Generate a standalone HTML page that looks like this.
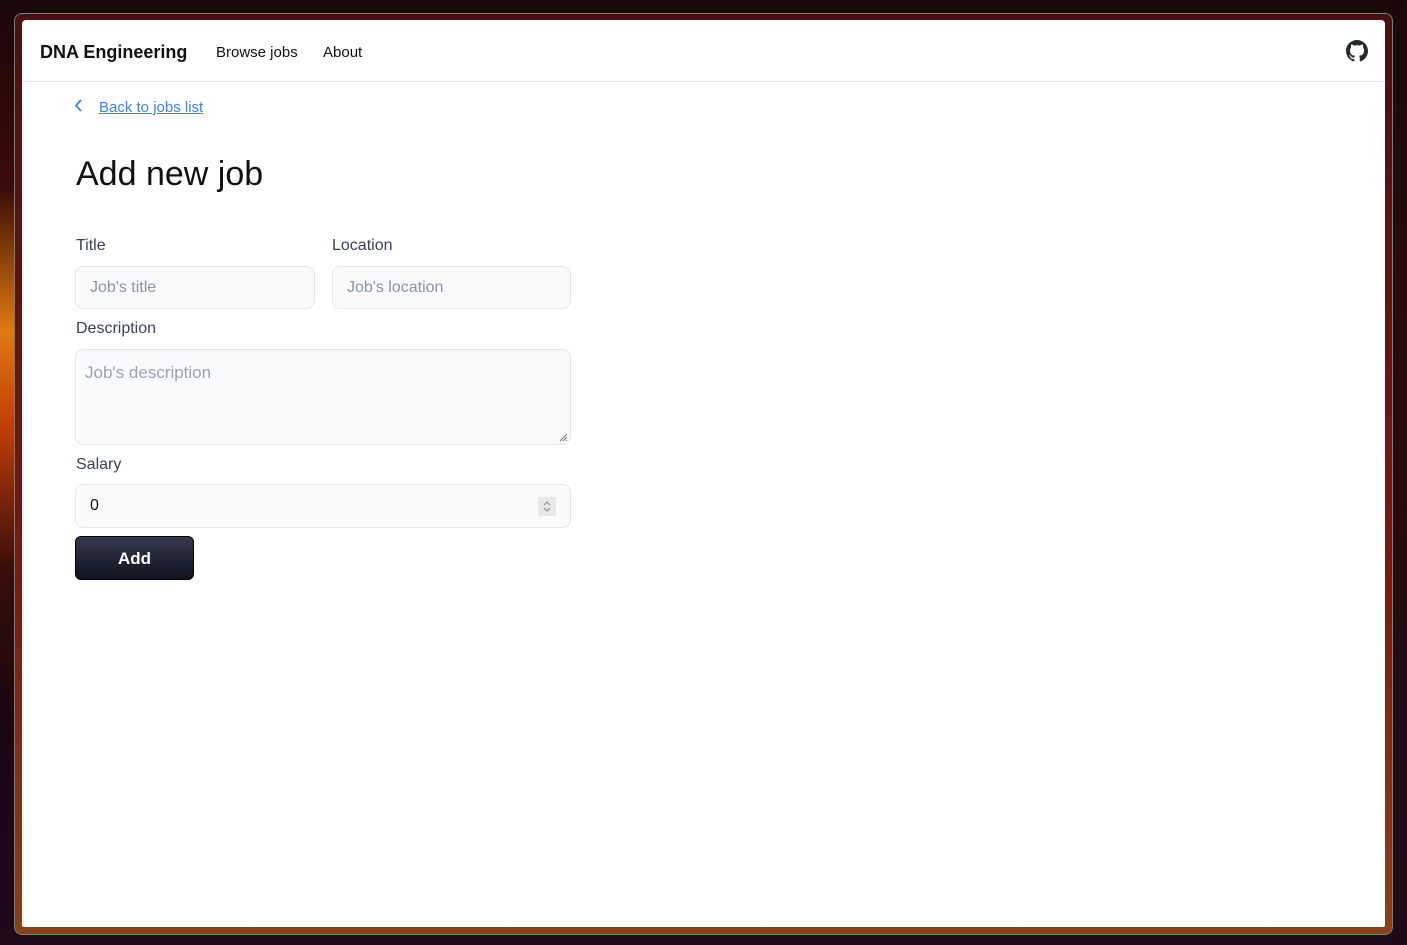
<!DOCTYPE html>
<html><head><meta charset="utf-8"><style>
*{box-sizing:border-box;margin:0;padding:0}
body{width:1407px;height:945px;overflow:hidden;position:relative;font-family:"Liberation Sans",sans-serif;
background:linear-gradient(180deg,#1a0808 0%,#3a0c08 20%,#e07a10 35%,#c23e08 45%,#3a0e0a 60%,#1a0710 75%,#1e0a18 100%)}
.bgr{position:absolute;left:1393px;top:0;width:14px;height:945px;background:linear-gradient(180deg,#1a0808,#2a0a10 40%,#1e0a16)}
.frame{position:absolute;left:14px;top:13px;width:1379px;height:922px;border:1px solid #5e8a86;border-radius:8px;
background:linear-gradient(180deg,#4a1010 0%,#7a1812 60%,#8a4018 100%)}
.page{position:absolute;left:22px;top:20px;width:1363px;height:907px;background:#fff;border-radius:4px 4px 2px 2px}
.nav{position:absolute;left:0;top:0;width:100%;height:62px;border-bottom:1px solid #e5e5e5}
.brand{position:absolute;left:18px;top:22px;font-size:18px;font-weight:bold;color:#111}
.nl{position:absolute;top:24px;font-size:15px;color:#111}
.back{position:absolute;left:77px;top:79px;font-size:15px;color:#3b82f6;text-decoration:underline}
.chev{position:absolute;left:51px;top:78px}
h1{position:absolute;left:54px;top:135px;font-size:34px;font-weight:normal;color:#111}
.lbl{position:absolute;font-size:16px;color:#374151}
.inp{position:absolute;background:#fafafa;border:1px solid #e3e5ea;border-radius:8px;font-size:16px;color:#8a94a6;padding-left:14px}
.btn{position:absolute;left:53px;top:516px;width:119px;height:44px;border-radius:6px;background:linear-gradient(180deg,#343a4e,#0f131d);
border:1px solid #000;color:#fff;font-weight:bold;font-size:17px;text-align:center;line-height:43px}
</style></head><body>
<div class="bgr"></div>
<div class="frame"></div>
<div class="page">
 <div class="nav">
  <div class="brand">DNA Engineering</div>
  <div class="nl" style="left:194px">Browse jobs</div>
  <div class="nl" style="left:301px">About</div>
  <svg style="position:absolute;left:1324px;top:20px" width="22" height="22" viewBox="0 0 16 16"><path fill="#24292f" d="M8 0C3.58 0 0 3.58 0 8c0 3.540 2.29 6.53 5.47 7.59.4.07.55-.17.55-.38 0-.19-.01-.82-.01-1.49-2.01.37-2.53-.49-2.690-.94-.09-.23-.48-.94-.82-1.130-.28-.15-.68-.52-.01-.53.63-.01 1.08.58 1.23.82.72 1.21 1.87.87 2.33.66.07-.52.28-.87.51-1.070-1.78-.2-3.64-.89-3.64-3.95 0-.87.31-1.59.82-2.150-.08-.2-.36-1.02.08-2.12 0 0 .67-.21 2.2.82.64-.18 1.32-.27 2-.27.68 0 1.36.09 2 .27 1.53-1.04 2.2-.82 2.2-.82.44 1.1.16 1.92.08 2.12.51.56.82 1.27.82 2.15 0 3.07-1.87 3.75-3.65 3.95.29.25.54.73.54 1.48 0 1.07-.01 1.93-.01 2.2 0 .21.15.46.55.38A8.013 8.013 0 0016 8c0-4.42-3.58-8-8-8z"/></svg>
 </div>
 <svg class="chev" width="12" height="16" viewBox="0 0 12 16"><path d="M8 2L3 7.5 8 13" fill="none" stroke="#3b82f6" stroke-width="1.8"/></svg>
 <div class="back">Back to jobs list</div>
 <h1>Add new job</h1>
 <div class="lbl" style="left:54px;top:217px">Title</div>
 <div class="lbl" style="left:310px;top:217px">Location</div>
 <div class="inp" style="left:53px;top:246px;width:240px;height:43px;line-height:42px">Job's title</div>
 <div class="inp" style="left:310px;top:246px;width:239px;height:43px;line-height:42px">Job's location</div>
 <div class="lbl" style="left:54px;top:300px">Description</div>
 <div class="inp" style="left:53px;top:329px;width:496px;height:96px;padding:13px 9px;font-size:17px;color:#9aa3b2;background:#f9fafb">Job's description
  <svg style="position:absolute;right:2px;bottom:2px" width="9" height="9"><path d="M8 1L1 8M8 4L4 8M8 7L7 8" stroke="#777" stroke-width="1"/></svg></div>
 <div class="lbl" style="left:54px;top:436px">Salary</div>
 <div class="inp" style="left:53px;top:464px;width:496px;height:44px;line-height:42px;color:#111">0
  <div style="position:absolute;right:14px;top:12px;width:18px;height:19px;background:#e8e8ea;line-height:0"><svg width="18" height="19" style="display:block"><path d="M6 8l3-3 3 3M6 11l3 3 3-3" fill="none" stroke="#888" stroke-width="1"/></svg></div></div>
 <div class="btn">Add</div>
</div>
</body></html>
